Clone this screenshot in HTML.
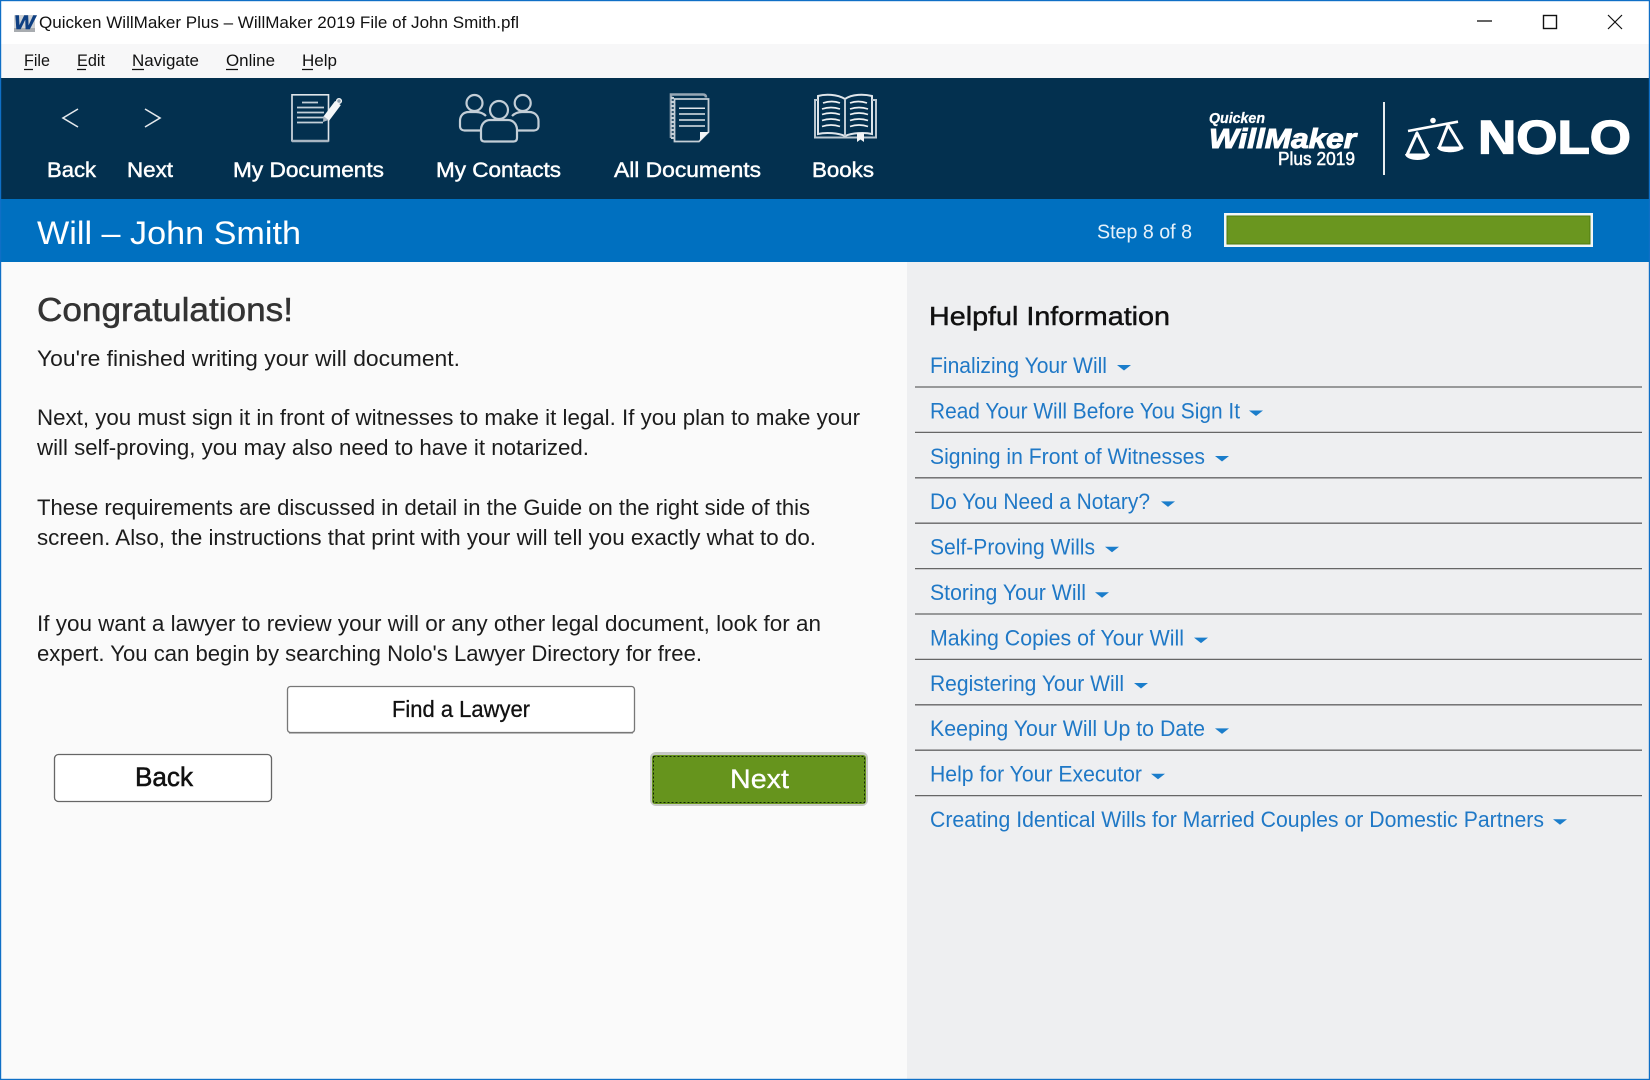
<!DOCTYPE html>
<html lang="en"><head><meta charset="utf-8"><title>Quicken WillMaker Plus</title>
<style>
html,body{margin:0;padding:0;width:1650px;height:1080px;overflow:hidden;background:#fff}
svg{position:absolute;left:0;top:0;display:block}
text{font-family:"Liberation Sans",Arial,sans-serif;white-space:pre}
.m{font-size:17px;fill:#111}
.n{font-size:21px;fill:#fff;stroke:#fff;stroke-width:.45px}
.p{font-size:22px;fill:#1c1c1c}
.l{font-size:22px;fill:#1f78c6}
.c{fill:#1a7dcb}
.i{fill:none;stroke:#dfe5ea;stroke-width:1.6}
.g{fill:none;stroke:#c3ced7;stroke-width:2.2}
</style></head><body>
<svg width="1650" height="1080" viewBox="0 0 1650 1080" xmlns="http://www.w3.org/2000/svg">
<!-- bands -->
<rect width="1650" height="44" fill="#fff"/>
<rect y="44" width="1650" height="34" fill="#f7f7f8"/>
<rect y="78" width="1650" height="121" fill="#03304f"/>
<rect y="199" width="1650" height="63" fill="#0070c0"/>
<rect y="262" width="907" height="818" fill="#fafafa"/>
<rect x="907" y="262" width="743" height="818" fill="#eeeff1"/>
<rect x=".5" y=".5" width="1649" height="1079" fill="none" stroke="#0f6fc6" stroke-width="1.4"/>

<!-- title bar -->
<rect x="14" y="15" width="21" height="17" rx="1" fill="#d0d2d4"/>
<rect x="14" y="28" width="21" height="4" fill="#a8acb0"/>
<text x="14" y="29" font-size="19" font-weight="bold" font-style="italic" fill="#0e3f82" stroke="#0e3f82" stroke-width=".5" textLength="21" lengthAdjust="spacingAndGlyphs">W</text>
<text x="39" y="28" class="m" textLength="480" lengthAdjust="spacingAndGlyphs">Quicken WillMaker Plus – WillMaker 2019 File of John Smith.pfl</text>
<path d="M1477 21h15" stroke="#111" stroke-width="1.3"/>
<rect x="1543.5" y="15.5" width="13" height="13" fill="none" stroke="#111" stroke-width="1.4"/>
<path d="M1608 15l14 14M1622 15l-14 14" stroke="#111" stroke-width="1.2"/>

<!-- menu -->
<text x="24" y="66" class="m" textLength="26" lengthAdjust="spacingAndGlyphs">File</text>
<text x="77" y="66" class="m" textLength="28" lengthAdjust="spacingAndGlyphs">Edit</text>
<text x="132" y="66" class="m" textLength="67" lengthAdjust="spacingAndGlyphs">Navigate</text>
<text x="226" y="66" class="m" textLength="49" lengthAdjust="spacingAndGlyphs">Online</text>
<text x="302" y="66" class="m" textLength="35" lengthAdjust="spacingAndGlyphs">Help</text>
<path d="M24 69.5h9M77 69.5h9M132 69.5h12M226 69.5h12M302 69.5h11" stroke="#111" stroke-width="1.2"/>

<!-- nav -->
<path d="M78 109l-15 9 15 9M145 109l15 9-15 9" fill="none" stroke="#e4e8ec" stroke-width="1.6"/>
<!-- my documents -->
<path d="M292 94.800H328.500v46H292z" class="i"/>
<path d="M292 141h36.500" stroke="#a9b6c2" stroke-width="2.400"/>
<path d="M302 102.500h16M297 107.500h27M297 112.500h27M297 117.500h27M297 122.500h26" stroke="#c4cfd8" stroke-width="1.700"/>
<path d="M326 119l12-16" stroke="#f5f7f8" stroke-width="7"/>
<circle cx="339" cy="101" r="2.400" fill="#8fa0ae" stroke="#f5f7f8" stroke-width="1.300"/>
<path d="M323 122l.5-6 5 4z" fill="#aeb9c3"/>
<!-- contacts -->
<path d="M486 116c-3-3-6-4-10-4h-7c-6 0-9 4-9 9v5c0 3 2 4.500 4.500 4.500H480M512 116c3-3 6-4 10-4h7c6 0 9.500 4 9.500 9v5c0 3-2 4.500-4.500 4.500H518" class="g"/>
<circle cx="474.500" cy="103" r="8" class="g" stroke="#d2dae1"/>
<circle cx="522.700" cy="103" r="8" class="g" stroke="#d2dae1"/>
<path d="M490 120h18c5 0 9 4 9 10v8c0 2.500-1.500 3.500-3.500 3.500h-29c-2 0-3.500-1-3.500-3.500v-8c0-6 4-10 9-10z" class="g" fill="#03304f"/>
<circle cx="499" cy="110" r="9" class="g" fill="#03304f"/>
<!-- all documents -->
<path d="M671 138V94.500h32c2 0 3 1 3 3" fill="none" stroke="#98a7b5" stroke-width="2.600"/>
<path d="M672.500 97v42" stroke="#c6d0d8" stroke-width="3" stroke-dasharray="2 2"/>
<path d="M674.500 99h34v33l-9.500 9.500H674.500z" fill="#03304f" stroke="#c5ced6" stroke-width="1.800"/>
<path d="M679 108.300h26M679 114h26M679 120h26M679 126h26" stroke="#e0e5ea" stroke-width="1.500"/>
<path d="M700 141v-9h9z" fill="#f2f4f6"/>
<!-- books -->
<path d="M845 99c-8-5-20-5-27-3v38c8-2 20-1 27 2 7-3 19-4 27-2V96c-8-2-20-2-27 3z" fill="none" stroke="#dfe5ea" stroke-width="2"/>
<path d="M845 99v37M818 100h-3v37.500h61V100h-4" fill="none" stroke="#bcc8d1" stroke-width="2"/>
<path d="M823 103q9-3 17 0M822 109q9-3 18 0M822 114.500q9-3 18 0M822 120.500q9-3 18 0M822 126.500q9-3 18 0M850 103q8-3 17 0M850 109q9-3 18 0M850 114.500q9-3 18 0M850 120.500q9-3 18 0M850 126.500q9-3 18 0" fill="none" stroke="#eef1f3" stroke-width="1.700"/>
<path d="M857 133h7v9l-3.500-2.500-3.500 2.500z" fill="#f2f4f6"/>

<text x="47" y="177" class="n" textLength="49" lengthAdjust="spacingAndGlyphs">Back</text>
<text x="127" y="177" class="n" textLength="46" lengthAdjust="spacingAndGlyphs">Next</text>
<text x="233" y="177" class="n" textLength="151" lengthAdjust="spacingAndGlyphs">My Documents</text>
<text x="436" y="177" class="n" textLength="125" lengthAdjust="spacingAndGlyphs">My Contacts</text>
<text x="614" y="177" class="n" textLength="147" lengthAdjust="spacingAndGlyphs">All Documents</text>
<text x="812" y="177" class="n" textLength="62" lengthAdjust="spacingAndGlyphs">Books</text>

<!-- logo -->
<text x="1209" y="123" font-size="15" font-weight="bold" font-style="italic" fill="#fff" stroke="#fff" stroke-width=".3" textLength="56" lengthAdjust="spacingAndGlyphs">Quicken</text>
<text x="1209" y="148" font-size="28" font-weight="bold" font-style="italic" fill="#fff" stroke="#fff" stroke-width="1" textLength="147" lengthAdjust="spacingAndGlyphs">WillMaker</text>
<text x="1278" y="165" font-size="18" fill="#fff" stroke="#fff" stroke-width=".5" textLength="77" lengthAdjust="spacingAndGlyphs">Plus 2019</text>
<rect x="1383" y="102" width="2" height="73" fill="#e8ecef"/>
<path d="M1408 131l50-9.300" stroke="#fff" stroke-width="2.600"/>
<circle cx="1433" cy="120.500" r="2.800" fill="#fff"/>
<path d="M1417 133l-10 22h21zM1448 125l-9 23h23z" fill="none" stroke="#fff" stroke-width="3" stroke-linejoin="round"/>
<path d="M1405 154h25c-1 8-24 8-25 0zM1437 147h26c-1 7-25 7-26 0z" fill="#fff"/>
<text x="1478" y="153.500" font-size="47" font-weight="bold" fill="#fff" stroke="#fff" stroke-width="1.300" textLength="153" lengthAdjust="spacingAndGlyphs">NOLO</text>

<!-- step bar -->
<text x="37" y="244" font-size="32" fill="#fff" textLength="264" lengthAdjust="spacingAndGlyphs">Will – John Smith</text>
<text x="1097" y="238.500" font-size="20" fill="#e6f1fa" textLength="95" lengthAdjust="spacingAndGlyphs">Step 8 of 8</text>
<rect x="1224" y="213" width="369" height="34" fill="#f2f6f8"/>
<rect x="1227" y="216" width="363" height="28" fill="#6a961f" stroke="#4d7a10" stroke-width="1"/>

<!-- left -->
<text x="37" y="321" font-size="33" fill="#333" stroke="#333" stroke-width=".5" textLength="256" lengthAdjust="spacingAndGlyphs">Congratulations!</text>
<text x="37" y="366" class="p" textLength="423" lengthAdjust="spacingAndGlyphs">You're finished writing your will document.</text>
<text x="37" y="425" class="p" textLength="823" lengthAdjust="spacingAndGlyphs">Next, you must sign it in front of witnesses to make it legal. If you plan to make your</text>
<text x="37" y="455" class="p" textLength="552" lengthAdjust="spacingAndGlyphs">will self-proving, you may also need to have it notarized.</text>
<text x="37" y="515" class="p" textLength="773" lengthAdjust="spacingAndGlyphs">These requirements are discussed in detail in the Guide on the right side of this</text>
<text x="37" y="545" class="p" textLength="779" lengthAdjust="spacingAndGlyphs">screen. Also, the instructions that print with your will tell you exactly what to do.</text>
<text x="37" y="631" class="p" textLength="784" lengthAdjust="spacingAndGlyphs">If you want a lawyer to review your will or any other legal document, look for an</text>
<text x="37" y="661" class="p" textLength="665" lengthAdjust="spacingAndGlyphs">expert. You can begin by searching Nolo's Lawyer Directory for free.</text>

<!-- buttons -->
<rect x="287.500" y="686.500" width="347" height="46" rx="3" fill="#fff" stroke="#777" stroke-width="1.300"/>
<path d="M289 732.700h344" stroke="#777" stroke-width="1.500"/>
<text x="392" y="717" font-size="23" fill="#111" stroke="#111" stroke-width=".3" textLength="138" lengthAdjust="spacingAndGlyphs">Find a Lawyer</text>
<rect x="54.500" y="754.500" width="217" height="47" rx="4" fill="#fff" stroke="#666" stroke-width="1.300"/>
<text x="135" y="786" font-size="27" fill="#111" stroke="#111" stroke-width=".55" textLength="58" lengthAdjust="spacingAndGlyphs">Back</text>
<rect x="650" y="752" width="218" height="54" rx="6" fill="#c6c8c4"/>
<rect x="652" y="755" width="214" height="49" rx="3" fill="#66941d"/>
<rect x="653.500" y="756.500" width="211" height="46" fill="none" stroke="#0f2404" stroke-width="1" stroke-dasharray="2 2" shape-rendering="crispEdges"/>
<text x="730" y="788" font-size="27" fill="#fff" stroke="#fff" stroke-width=".3" textLength="59" lengthAdjust="spacingAndGlyphs">Next</text>

<!-- right -->
<text x="929" y="325" font-size="26" fill="#111" stroke="#111" stroke-width=".45" textLength="241" lengthAdjust="spacingAndGlyphs">Helpful Information</text>
<g stroke="#666" stroke-width="1.300">
<path d="M915 387h727M915 432.400h727M915 477.800h727M915 523.200h727M915 568.600h727M915 614h727M915 659.400h727M915 704.800h727M915 750.200h727M915 795.600h727"/>
</g>
<text x="930" y="373" class="l" textLength="177" lengthAdjust="spacingAndGlyphs">Finalizing Your Will</text>
<path class="c" d="M1117 365h14l-7 5.500z"/>
<text x="930" y="418.400" class="l" textLength="310" lengthAdjust="spacingAndGlyphs">Read Your Will Before You Sign It</text>
<path class="c" d="M1249 410.500h14l-7 5.500z"/>
<text x="930" y="463.800" class="l" textLength="275" lengthAdjust="spacingAndGlyphs">Signing in Front of Witnesses</text>
<path class="c" d="M1215 456h14l-7 5.500z"/>
<text x="930" y="509.200" class="l" textLength="220" lengthAdjust="spacingAndGlyphs">Do You Need a Notary?</text>
<path class="c" d="M1161 501.400h14l-7 5.500z"/>
<text x="930" y="554.600" class="l" textLength="165" lengthAdjust="spacingAndGlyphs">Self-Proving Wills</text>
<path class="c" d="M1105 546.800h14l-7 5.500z"/>
<text x="930" y="600" class="l" textLength="156" lengthAdjust="spacingAndGlyphs">Storing Your Will</text>
<path class="c" d="M1095 592.200h14l-7 5.500z"/>
<text x="930" y="645.400" class="l" textLength="254" lengthAdjust="spacingAndGlyphs">Making Copies of Your Will</text>
<path class="c" d="M1194 637.600h14l-7 5.500z"/>
<text x="930" y="690.800" class="l" textLength="194" lengthAdjust="spacingAndGlyphs">Registering Your Will</text>
<path class="c" d="M1134 683h14l-7 5.500z"/>
<text x="930" y="736.200" class="l" textLength="275" lengthAdjust="spacingAndGlyphs">Keeping Your Will Up to Date</text>
<path class="c" d="M1215 728.400h14l-7 5.500z"/>
<text x="930" y="781.600" class="l" textLength="212" lengthAdjust="spacingAndGlyphs">Help for Your Executor</text>
<path class="c" d="M1151 773.800h14l-7 5.500z"/>
<text x="930" y="827" class="l" textLength="614" lengthAdjust="spacingAndGlyphs">Creating Identical Wills for Married Couples or Domestic Partners</text>
<path class="c" d="M1553 819.200h14l-7 5.500z"/>
</svg>
</body></html>
